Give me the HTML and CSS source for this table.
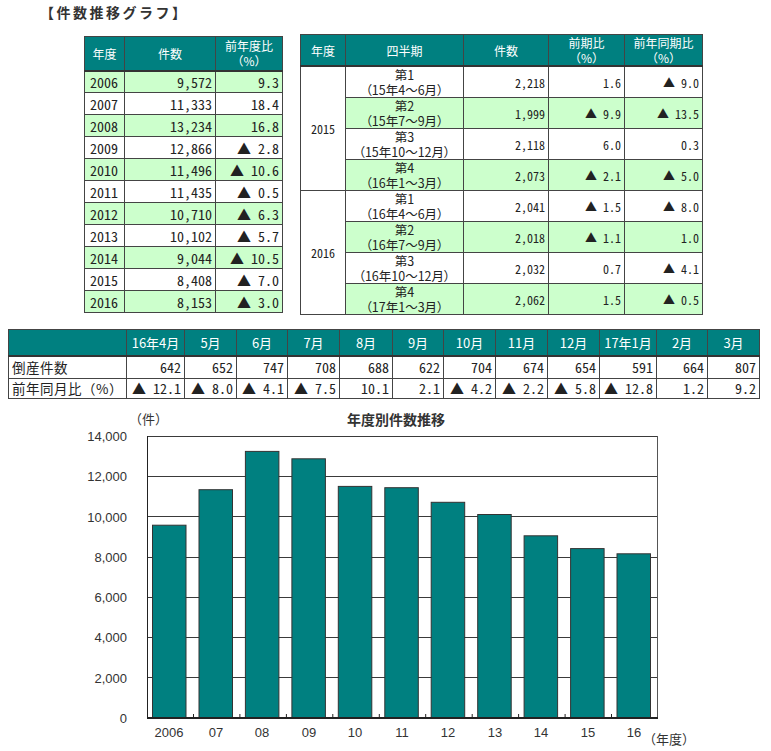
FILE: index.html
```html
<!DOCTYPE html>
<html lang="ja">
<head>
<meta charset="utf-8">
<title>件数推移グラフ</title>
<link rel="stylesheet" href="styles.css">
</head>
<body>
<div class="page">
  <h1 class="title">【件数推移グラフ】</h1>
  <div class="tables">
    <table class="t-year">
      <colgroup><col class="w40"><col class="w91"><col class="w67"></colgroup>
      <thead>
        <tr><th>年度</th><th>件数</th><th><span class="l">前年度比</span><span class="l">（%）</span></th></tr>
      </thead>
      <tbody>
        <tr class="g"><td class="yr">2006</td><td class="num">9,572</td><td class="num">9.3</td></tr>
        <tr><td class="yr">2007</td><td class="num">11,333</td><td class="num">18.4</td></tr>
        <tr class="g"><td class="yr">2008</td><td class="num">13,234</td><td class="num">16.8</td></tr>
        <tr><td class="yr">2009</td><td class="num">12,866</td><td class="num">▲ 2.8</td></tr>
        <tr class="g"><td class="yr">2010</td><td class="num">11,496</td><td class="num">▲ 10.6</td></tr>
        <tr><td class="yr">2011</td><td class="num">11,435</td><td class="num">▲ 0.5</td></tr>
        <tr class="g"><td class="yr">2012</td><td class="num">10,710</td><td class="num">▲ 6.3</td></tr>
        <tr><td class="yr">2013</td><td class="num">10,102</td><td class="num">▲ 5.7</td></tr>
        <tr class="g"><td class="yr">2014</td><td class="num">9,044</td><td class="num">▲ 10.5</td></tr>
        <tr><td class="yr">2015</td><td class="num">8,408</td><td class="num">▲ 7.0</td></tr>
        <tr class="g"><td class="yr">2016</td><td class="num">8,153</td><td class="num">▲ 3.0</td></tr>
      </tbody>
    </table>

    <table class="t-q">
      <colgroup><col class="w45"><col class="w118"><col class="w85"><col class="w76"><col class="w78"></colgroup>
      <thead>
        <tr><th>年度</th><th>四半期</th><th>件数</th><th><span class="l">前期比</span><span class="l">（%）</span></th><th><span class="l">前年同期比</span><span class="l">（%）</span></th></tr>
      </thead>
      <tbody>
        <tr><td rowspan="4" class="qy">2015</td><td class="qn"><span class="l">第1</span><span class="l">（15年4～6月）</span></td><td class="num">2,218</td><td class="num">1.6</td><td class="num">▲ 9.0</td></tr>
        <tr class="g"><td class="qn"><span class="l">第2</span><span class="l">（15年7～9月）</span></td><td class="num">1,999</td><td class="num">▲ 9.9</td><td class="num">▲ 13.5</td></tr>
        <tr><td class="qn"><span class="l">第3</span><span class="l">（15年10～12月）</span></td><td class="num">2,118</td><td class="num">6.0</td><td class="num">0.3</td></tr>
        <tr class="g"><td class="qn"><span class="l">第4</span><span class="l">（16年1～3月）</span></td><td class="num">2,073</td><td class="num">▲ 2.1</td><td class="num">▲ 5.0</td></tr>
        <tr><td rowspan="4" class="qy">2016</td><td class="qn"><span class="l">第1</span><span class="l">（16年4～6月）</span></td><td class="num">2,041</td><td class="num">▲ 1.5</td><td class="num">▲ 8.0</td></tr>
        <tr class="g"><td class="qn"><span class="l">第2</span><span class="l">（16年7～9月）</span></td><td class="num">2,018</td><td class="num">▲ 1.1</td><td class="num">1.0</td></tr>
        <tr><td class="qn"><span class="l">第3</span><span class="l">（16年10～12月）</span></td><td class="num">2,032</td><td class="num">0.7</td><td class="num">▲ 4.1</td></tr>
        <tr class="g"><td class="qn"><span class="l">第4</span><span class="l">（17年1～3月）</span></td><td class="num">2,062</td><td class="num">1.5</td><td class="num">▲ 0.5</td></tr>
      </tbody>
    </table>
  </div>

  <table class="t-month">
    <colgroup>
      <col class="w118"><col class="w58"><col class="w52"><col class="w51"><col class="w52"><col class="w53"><col class="w51">
      <col class="w52"><col class="w52"><col class="w52"><col class="w57"><col class="w51"><col class="w52">
    </colgroup>
    <thead>
      <tr><th></th><th>16年4月</th><th>5月</th><th>6月</th><th>7月</th><th>8月</th><th>9月</th><th>10月</th><th>11月</th><th>12月</th><th>17年1月</th><th>2月</th><th>3月</th></tr>
    </thead>
    <tbody>
      <tr class="r1"><td class="lbl">倒産件数</td><td class="num">642</td><td class="num">652</td><td class="num">747</td><td class="num">708</td><td class="num">688</td><td class="num">622</td><td class="num">704</td><td class="num">674</td><td class="num">654</td><td class="num">591</td><td class="num">664</td><td class="num">807</td></tr>
      <tr class="r2"><td class="lbl">前年同月比（%）</td><td class="num">▲ 12.1</td><td class="num">▲ 8.0</td><td class="num">▲ 4.1</td><td class="num">▲ 7.5</td><td class="num">10.1</td><td class="num">2.1</td><td class="num">▲ 4.2</td><td class="num">▲ 2.2</td><td class="num">▲ 5.8</td><td class="num">▲ 12.8</td><td class="num">1.2</td><td class="num">9.2</td></tr>
    </tbody>
  </table>

  <svg class="chart" width="771" height="351" viewBox="0 0 771 351" xmlns="http://www.w3.org/2000/svg">
    <text class="ctitle" x="396" y="23" text-anchor="middle">年度別件数推移</text>
    <text class="cunit" x="129" y="22">（件）</text>

    <g class="grid">
      <line x1="147" y1="34.5" x2="658" y2="34.5"/>
      <line x1="147" y1="74.5" x2="658" y2="74.5"/>
      <line x1="147" y1="114.5" x2="658" y2="114.5"/>
      <line x1="147" y1="155.5" x2="658" y2="155.5"/>
      <line x1="147" y1="195.5" x2="658" y2="195.5"/>
      <line x1="147" y1="235.5" x2="658" y2="235.5"/>
      <line x1="147" y1="275.5" x2="658" y2="275.5"/>
    </g>
    <line class="rborder" x1="657.5" y1="34" x2="657.5" y2="316"/>

    <g class="bars">
      <rect x="152.5" y="123.2" width="33.5" height="192.8"/>
      <rect x="199" y="87.7" width="33.5" height="228.3"/>
      <rect x="245.4" y="49.4" width="33.5" height="266.6"/>
      <rect x="291.9" y="56.8" width="33.5" height="259.2"/>
      <rect x="338.3" y="84.4" width="33.5" height="231.6"/>
      <rect x="384.8" y="85.7" width="33.5" height="230.3"/>
      <rect x="431.2" y="100.3" width="33.5" height="215.7"/>
      <rect x="477.7" y="112.5" width="33.5" height="203.5"/>
      <rect x="524.1" y="133.8" width="33.5" height="182.2"/>
      <rect x="570.6" y="146.6" width="33.5" height="169.4"/>
      <rect x="617" y="151.8" width="33.5" height="164.2"/>
    </g>

    <g class="ticks">
      <line x1="193.5" y1="312" x2="193.5" y2="316"/>
      <line x1="239.9" y1="312" x2="239.9" y2="316"/>
      <line x1="286.4" y1="312" x2="286.4" y2="316"/>
      <line x1="332.8" y1="312" x2="332.8" y2="316"/>
      <line x1="379.3" y1="312" x2="379.3" y2="316"/>
      <line x1="425.7" y1="312" x2="425.7" y2="316"/>
      <line x1="472.2" y1="312" x2="472.2" y2="316"/>
      <line x1="518.6" y1="312" x2="518.6" y2="316"/>
      <line x1="565.1" y1="312" x2="565.1" y2="316"/>
      <line x1="611.5" y1="312" x2="611.5" y2="316"/>
    </g>

    <line class="axis" x1="147.5" y1="34" x2="147.5" y2="317"/>
    <line class="axis xaxis" x1="147" y1="316" x2="658" y2="316"/>

    <g class="ylabels">
      <text x="127" y="39">14,000</text>
      <text x="127" y="79">12,000</text>
      <text x="127" y="120">10,000</text>
      <text x="127" y="160">8,000</text>
      <text x="127" y="200">6,000</text>
      <text x="127" y="240">4,000</text>
      <text x="127" y="281">2,000</text>
      <text x="127" y="321">0</text>
    </g>

    <g class="xlabels">
      <text x="169" y="335">2006</text>
      <text x="216" y="335">07</text>
      <text x="262" y="335">08</text>
      <text x="309" y="335">09</text>
      <text x="355" y="335">10</text>
      <text x="402" y="335">11</text>
      <text x="448" y="335">12</text>
      <text x="495" y="335">13</text>
      <text x="541" y="335">14</text>
      <text x="588" y="335">15</text>
      <text x="634" y="335">16</text>
    </g>
    <text class="cunit" x="643" y="342">（年度）</text>
  </svg>
</div>
</body>
</html>
```

FILE: styles.css
```css
* { box-sizing: border-box; }

body {
  margin: 0;
  background: #ffffff;
  color: #222222;
  font-family: "Noto Sans CJK JP", "Liberation Sans", sans-serif;
}

.page { width: 771px; }

.title {
  margin: 0;
  padding: 3px 0 0 40px;
  font-size: 14px;
  line-height: 18px;
  font-weight: bold;
  letter-spacing: 2.5px;
  color: #333333;
}

.tables {
  display: flex;
  align-items: flex-start;
  gap: 17px;
  padding-left: 84px;
  margin-top: 13px;
}

table {
  border-collapse: collapse;
  table-layout: fixed;
}

th, td {
  border: 1px solid #444444;
  padding: 0;
  white-space: nowrap;
}

th {
  background: #008080;
  color: #ffffff;
  font-weight: normal;
  font-size: 12px;
  line-height: 15px;
  text-align: center;
  border-bottom: 2px solid #333333;
}

.l {
  display: block;
  height: 15px;
  line-height: 15px;
}

tr.g td { background: #ccffcc; }

.num {
  font-family: "Noto Sans Mono CJK JP", "DejaVu Sans Mono", monospace;
  text-align: right;
  padding-right: 3px;
}

/* column widths */
.w40 { width: 40px; }
.w45 { width: 45px; }
.w51 { width: 51px; }
.w52 { width: 52px; }
.w53 { width: 53px; }
.w57 { width: 57px; }
.w58 { width: 58px; }
.w67 { width: 67px; }
.w76 { width: 76px; }
.w78 { width: 78px; }
.w85 { width: 85px; }
.w91 { width: 91px; }
.w118 { width: 118px; }

/* yearly table */
.t-year { width: 198px; margin-top: 2px; }
.t-year thead tr { height: 34px; }
.t-year tbody tr { height: 22px; }
.t-year td { font-size: 14px; line-height: 18px; }
.t-year .yr {
  font-family: "Noto Sans Mono CJK JP", "DejaVu Sans Mono", monospace;
  padding-left: 5px;
}

/* quarterly table */
.t-q { width: 402px; }
.t-q thead tr { height: 30px; }
.t-q tbody tr { height: 31px; }
.t-q td { font-size: 12px; line-height: 15px; }
.t-q .qy {
  font-family: "Noto Sans Mono CJK JP", "DejaVu Sans Mono", monospace;
  text-align: center;
  background: #ffffff;
}
.t-q .qn {
  text-align: center;
  font-size: 12.5px;
  font-feature-settings: "palt";
}

/* monthly table */
.t-month {
  width: 751px;
  margin: 14px 0 0 8px;
}
.t-month thead tr { height: 26px; }
.t-month th { font-size: 13px; }
.t-month .r1 { height: 23px; }
.t-month .r2 { height: 20px; }
.t-month td { font-size: 14px; line-height: 17px; }
.t-month .lbl {
  font-size: 13.5px;
  padding-left: 3px;
  letter-spacing: 0.5px;
}

/* chart */
.chart {
  display: block;
  margin-top: 3px;
}
.chart text {
  fill: #333333;
}
.ctitle {
  font-family: "Noto Sans CJK JP", sans-serif;
  font-size: 14px;
  font-weight: bold;
}
.cunit {
  font-family: "Noto Sans CJK JP", sans-serif;
  font-size: 13px;
}
.grid line { stroke: #3a3a3a; stroke-width: 1; }
.rborder { stroke: #555555; stroke-width: 1; }
.bars rect { fill: #008080; stroke: #333333; stroke-width: 1; }
.ticks line { stroke: #222222; stroke-width: 1; }
.axis { stroke: #222222; stroke-width: 1; }
.xaxis { stroke-width: 2; }
.ylabels text {
  font-family: "Liberation Sans", sans-serif;
  font-size: 13px;
  text-anchor: end;
}
.xlabels text {
  font-family: "Liberation Sans", sans-serif;
  font-size: 13px;
  text-anchor: middle;
}
```
